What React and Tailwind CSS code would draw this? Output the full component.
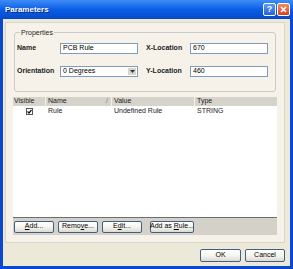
import React from 'react';

const font = { fontFamily: '"Liberation Sans", Arial, sans-serif' };

function XpButton({ children, className = '' }) {
  return (
    <div
      className={`flex items-center justify-center whitespace-nowrap rounded-[2px] border border-[#3f5f86] bg-gradient-to-b from-white via-[#f6f5f0] to-[#dcdad0] text-[7px] text-black ${className}`}
    >
      {children}
    </div>
  );
}

function TextBox({ value, className = '' }) {
  return (
    <div className={`flex h-[11px] items-center border border-[#7f9db9] bg-white pl-[2px] text-[7px] text-black ${className}`}>
      {value}
    </div>
  );
}

export default function App() {
  return (
    <div style={font} className="flex h-[269px] w-[293px] flex-col overflow-hidden bg-[#0b47d0]">
      {/* TITLE BAR */}
      <div className="flex h-[19px] shrink-0 items-center justify-between bg-gradient-to-b from-[#3d8cf7] via-[#0a5ee6] to-[#0649c9] pl-[5px] pr-[3px]">
        <span className="text-[8px] font-bold text-white [text-shadow:1px_1px_0_#0a2b7a]">Parameters</span>
        <div className="flex gap-[1px]">
          <div className="flex h-[13px] w-[13px] items-center justify-center rounded-[2px] border border-white bg-gradient-to-b from-[#5a9bf8] to-[#2463dc] text-[9px] font-bold leading-none text-white">
            ?
          </div>
          <div className="flex h-[13px] w-[13px] items-center justify-center rounded-[2px] border border-white bg-gradient-to-b from-[#f08a63] to-[#d6401c]">
            <svg width="7" height="7" viewBox="0 0 7 7">
              <path d="M1 1 L6 6 M6 1 L1 6" stroke="white" strokeWidth="1.6" />
            </svg>
          </div>
        </div>
      </div>

      {/* BODY */}
      <div className="mx-[3px] mb-[3px] flex flex-1 flex-col bg-[#ece9d8]">
        {/* PANEL */}
        <div className="ml-[2px] mr-[5px] mt-[3px] flex h-[221px] flex-col border border-[#d8d4c6] bg-[#f6f2ea] px-[7px]">
          {/* PROPERTIES GROUP */}
          <div className="relative mt-[9px] ml-[1px] mr-[1px] h-[60px] rounded-[3px] border border-[#c9ccc8]">
            <span className="absolute left-[5px] top-[-5px] bg-[#f6f2ea] px-[1px] text-[7px] leading-[9px] text-[#222]">
              Properties
            </span>
            <div className="mt-[10px] flex items-center pl-[2px]">
              <span className="w-[43px] text-[7px] font-bold text-[#222]">Name</span>
              <TextBox value="PCB Rule" className="w-[78px]" />
              <span className="ml-[8px] w-[44px] text-[7px] font-bold text-[#222]">X-Location</span>
              <TextBox value="670" className="w-[78px]" />
            </div>
            <div className="mt-[12px] flex items-center pl-[2px]">
              <span className="w-[43px] text-[7px] font-bold text-[#222]">Orientation</span>
              <div className="flex h-[11px] w-[78px] items-center justify-between border border-[#7f9db9] bg-white pl-[2px] text-[7px]">
                0 Degrees
                <div className="m-[1px] flex h-[7px] w-[8px] items-center justify-center bg-[#d8d6cc]">
                  <svg width="5" height="3" viewBox="0 0 5 3">
                    <path d="M0 0 H5 L2.5 3 Z" fill="#333" />
                  </svg>
                </div>
              </div>
              <span className="ml-[8px] w-[44px] text-[7px] font-bold text-[#222]">Y-Location</span>
              <TextBox value="460" className="w-[78px]" />
            </div>
          </div>

          {/* TABLE */}
          <div className="mt-[5px] flex flex-col">
            <div className="flex h-[120px] flex-col bg-white">
              <div className="flex h-[9px] items-center bg-[#d6d3cb] text-[7px] text-[#222]">
                <span className="w-[33px] border-r border-[#f4f2ec] pl-[1px]">Visible</span>
                <span className="flex w-[66px] justify-between border-r border-[#f4f2ec] pl-[2px] pr-[3px]">
                  Name<span className="text-[#777]">/</span>
                </span>
                <span className="w-[83px] border-r border-[#f4f2ec] pl-[2px]">Value</span>
                <span className="pl-[2px]">Type</span>
              </div>
              <div className="mt-[1px] flex h-[9px] items-center text-[7px] text-[#222]">
                <span className="flex w-[33px] justify-center">
                  <span className="flex h-[7px] w-[7px] items-center justify-center border border-[#555] bg-white">
                    <svg width="5" height="5" viewBox="0 0 5 5">
                      <path d="M0.5 2.5 L2 4 L4.5 1" stroke="#111" strokeWidth="1.2" fill="none" />
                    </svg>
                  </span>
                </span>
                <span className="w-[66px] pl-[2px]">Rule</span>
                <span className="w-[83px] pl-[2px]">Undefined Rule</span>
                <span className="pl-[2px]">STRING</span>
              </div>
            </div>
            <div className="flex h-[18px] items-center gap-[4px] border-t border-[#6e6e6e] bg-[#d4d1c9] pl-[1px]">
              <XpButton className="h-[12px] w-[40px]">
                <span><u>A</u>dd...</span>
              </XpButton>
              <XpButton className="h-[12px] w-[40px]">
                <span>Remo<u>v</u>e...</span>
              </XpButton>
              <XpButton className="h-[12px] w-[40px]">
                <span>E<u>d</u>it...</span>
              </XpButton>
              <XpButton className="ml-[4px] h-[12px] w-[44px]">
                <span>Add as <u>R</u>ule...</span>
              </XpButton>
            </div>
          </div>
        </div>

        {/* FOOTER */}
        <div className="mt-[6px] flex justify-end gap-[4px] pr-[5px]">
          <XpButton className="h-[13px] w-[41px]">OK</XpButton>
          <XpButton className="h-[13px] w-[40px]">Cancel</XpButton>
        </div>
      </div>
    </div>
  );
}
